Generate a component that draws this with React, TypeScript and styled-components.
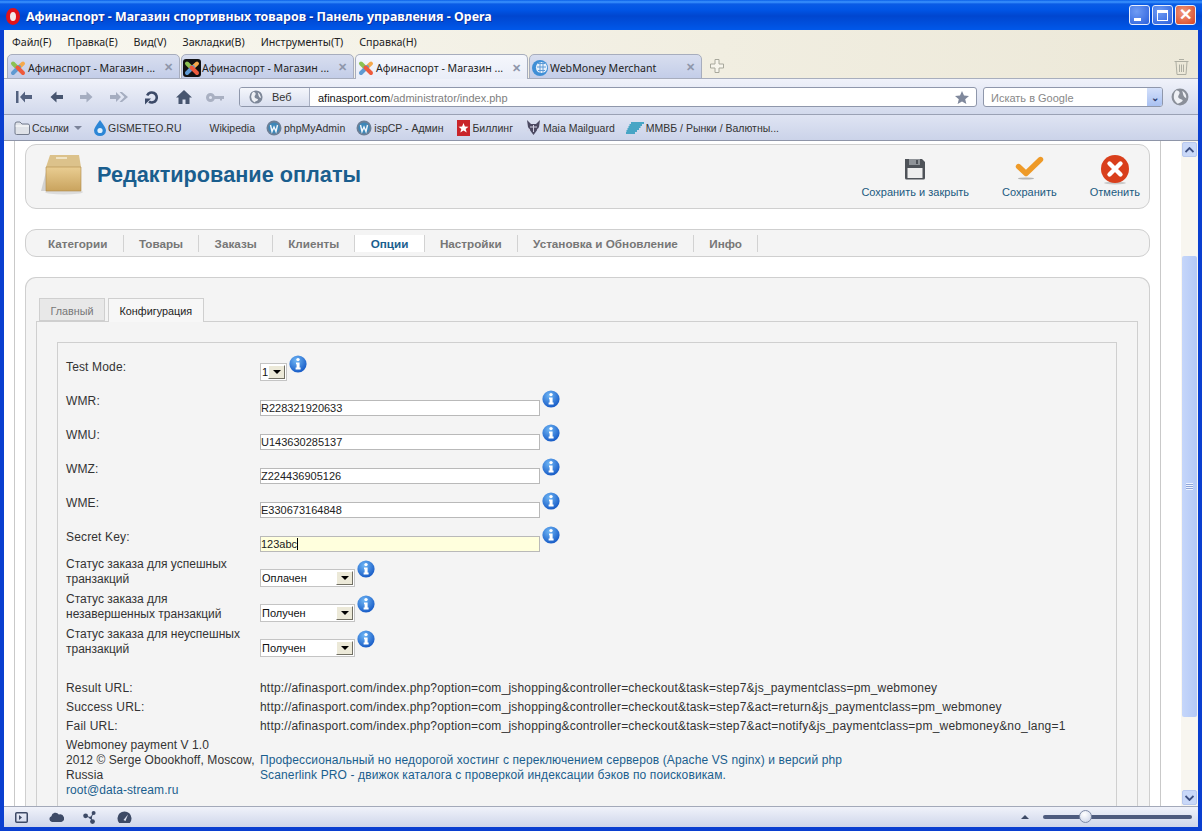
import React from "react";
import styled, { createGlobalStyle } from "styled-components";

const GlobalStyle = createGlobalStyle`
  html, body {
    margin: 0;
    height: 100%;
    overflow: hidden;
    background: #0831d9;
  }
  * {
    box-sizing: border-box;
  }
`;

const UI_FONT = `"Noto Sans", "Liberation Sans", sans-serif`;
const PAGE_FONT = `"Liberation Sans", Arial, sans-serif`;

/* ---------- icons ---------- */

function JoomlaIcon({ dark }: { dark?: boolean }) {
  return (
    <svg width="18" height="18" viewBox="0 0 18 18">
      {dark && <rect width="18" height="18" rx="3" fill="#111" />}
      <g fill="none" strokeWidth="4" strokeLinecap="round">
        <path d="M4 4.5 L9.5 10" stroke="#8cc152" />
        <path d="M14 4.5 L8 10" stroke="#f5a94c" />
        <path d="M4 14 L10 8" stroke="#5f9ad2" />
        <path d="M14 14 L8.5 8.5" stroke="#ee5a3c" />
      </g>
    </svg>
  );
}

function WebMoneyIcon() {
  return (
    <svg width="18" height="18" viewBox="0 0 18 18">
      <circle cx="9" cy="9" r="8" fill="#3f8fd6" />
      <circle cx="10.5" cy="8.5" r="5.6" fill="#e8f1fb" />
      <path d="M7 4.5h7M6 8h9M7 11.5h7M9 3v11M12 3v11" stroke="#5c9ad6" strokeWidth="1" />
    </svg>
  );
}

function NavArrow({ color, kind }: { color: string; kind: "first" | "back" | "forward" | "fast" }) {
  const paths = {
    first: "M1 1h2.5v12H1z M10 1.5 L5 7 L10 12.5 V9 H17 V5 H10z",
    back: "M7.5 1.5 L1.5 7 L7.5 12.5 V9 H14 V5 H7.5z",
    forward: "M6.5 1.5 L12.5 7 L6.5 12.5 V9 H0 V5 H6.5z",
    fast: "M6 2 L11 7 L6 12 V9 H0 V5 H6z M12 2 L18 7 L12 12 H9.5 L14.5 7 L9.5 2z",
  };
  const width = kind === "fast" ? 18 : kind === "first" ? 17 : 14;
  return (
    <svg width={width} height="14" viewBox={`0 0 ${width} 14`}>
      <path d={paths[kind]} fill={color} />
    </svg>
  );
}

function ReloadIcon() {
  return (
    <svg width="14" height="15" viewBox="0 0 14 15">
      <path d="M2.2 5.5 A5 5 0 1 1 4 11.6" fill="none" stroke="#3c4a68" strokeWidth="2.6" />
      <path d="M0 14.5 V8.5 H6 z" fill="#3c4a68" />
    </svg>
  );
}

function HomeIcon() {
  return (
    <svg width="16" height="14" viewBox="0 0 16 14">
      <path d="M8 0 L16 7.5 H13.5 V14 H9.5 V9.5 H6.5 V14 H2.5 V7.5 H0z" fill="#47556f" />
    </svg>
  );
}

function KeyIcon() {
  return (
    <svg width="18" height="9" viewBox="0 0 18 9">
      <path d="M4.5 0 A4.5 4.5 0 1 1 4.5 9 A4.5 4.5 0 1 1 4.5 0z M4.5 3 A1.5 1.5 0 1 0 4.5 6 A1.5 1.5 0 1 0 4.5 3z" fill="#a9b0c2" fillRule="evenodd" />
      <path d="M8 3 H18 V6 H16 V7.5 H14 V6 H8z" fill="#a9b0c2" />
    </svg>
  );
}

function GlobeIcon({ size, color }: { size: number; color: string }) {
  return (
    <svg width={size} height={size} viewBox="0 0 16 16">
      <circle cx="8" cy="8" r="7.5" fill={color} />
      <path d="M5 2 Q9 3 7 6 T9 10 T6 14 Q2 11 2.5 7 T5 2z M10 2.5 Q14 5 13.5 9 Q12 9 11 6.5z" fill="#eef0f5" />
    </svg>
  );
}

function StarIcon() {
  return (
    <svg width="14" height="13" viewBox="0 0 14 13">
      <path d="M7 0 L9 4.6 L14 5 L10.2 8.2 L11.4 13 L7 10.4 L2.6 13 L3.8 8.2 L0 5 L5 4.6z" fill="#7f889c" />
    </svg>
  );
}

function PlusIcon() {
  return (
    <svg width="14" height="14" viewBox="0 0 14 14">
      <path d="M5 .5 H9 V5 H13.5 V9 H9 V13.5 H5 V9 H.5 V5 H5z" fill="#f7f5ec" stroke="#a8a89c" />
    </svg>
  );
}

function TrashIcon() {
  return (
    <svg width="15" height="17" viewBox="0 0 15 17">
      <path d="M5 1.5 H10 M.5 3.5 H14.5 M2 4 L3 16.5 H12 L13 4 M5.5 6.5 V14 M7.5 6.5 V14 M9.5 6.5 V14" fill="none" stroke="#aeaea2" />
    </svg>
  );
}

function FolderIcon() {
  return (
    <svg width="16" height="14" viewBox="0 0 16 14">
      <path d="M1 3 Q1 1 3 1 H6 L8 3 H14 Q15.5 3 15.5 5 V12 Q15.5 13.5 14 13.5 H2.5 Q1 13.5 1 12z" fill="#dfe2e8" stroke="#737b8c" />
      <path d="M1.5 5 H15" stroke="#fff" />
    </svg>
  );
}

function DropIcon() {
  return (
    <svg width="12" height="16" viewBox="0 0 12 16">
      <path d="M6 0 Q12 8 12 10.5 A6 5.5 0 0 1 0 10.5 Q0 8 6 0z" fill="#2c86d6" />
      <circle cx="6" cy="10.5" r="2.6" fill="#dff0fc" />
    </svg>
  );
}

function WampIcon() {
  return (
    <svg width="16" height="16" viewBox="0 0 16 16">
      <circle cx="8" cy="8" r="7.5" fill="#6c7f96" />
      <circle cx="8" cy="8" r="5.6" fill="#3d87b8" />
      <path d="M4.5 5 L6 11.5 L8 7 L10 11.5 L11.5 5" fill="none" stroke="#f2f6fa" strokeWidth="1.4" />
    </svg>
  );
}

function BillingIcon() {
  return (
    <svg width="13" height="16" viewBox="0 0 13 16">
      <rect width="13" height="16" fill="#c9252a" />
      <path d="M6.5 3 L7.9 6.5 L11.5 6.7 L8.7 9 L9.7 12.5 L6.5 10.5 L3.3 12.5 L4.3 9 L1.5 6.7 L5.1 6.5z" fill="#fff" />
    </svg>
  );
}

function MaiaIcon() {
  return (
    <svg width="15" height="17" viewBox="0 0 15 17">
      <path d="M1 1 L5 5 H10 L14 1 L13 8 L10.5 12 L7.5 16 L4.5 12 L2 8z" fill="#4c4a62" />
      <path d="M4 8 H11 M7.5 6 V13 M1 12 L4 10 M14 12 L11 10" stroke="#d4d2e4" strokeWidth="1" />
    </svg>
  );
}

function MmvbIcon() {
  return (
    <svg width="18" height="12" viewBox="0 0 18 12">
      <path d="M5 1 H18 M3.5 3 H16 M2.5 5 H14.5 M1.5 7 H13 M.5 9 H11 M0 11 H9" stroke="#1a94b8" strokeWidth="1.3" />
    </svg>
  );
}

function BoxIcon() {
  return (
    <svg width="43" height="42" viewBox="0 0 43 42">
      <defs>
        <linearGradient id="boxFront" x1="0" y1="0" x2="0" y2="1">
          <stop offset="0" stopColor="#e9cd92" />
          <stop offset="1" stopColor="#c9a35e" />
        </linearGradient>
      </defs>
      <ellipse cx="24" cy="38" rx="19" ry="2.5" fill="#dcdcdc" />
      <path d="M1 37 L7 14 V37z" fill="#d2d2d2" />
      <path d="M10 1 H39 L41 13 H6z" fill="#dcc28b" />
      <path d="M6 13 H41 V37 H6z" fill="url(#boxFront)" stroke="#b08c4c" strokeWidth=".6" />
      <rect x="16" y="3" width="11" height="2" fill="#f0e4c6" />
    </svg>
  );
}

function SaveIcon() {
  return (
    <svg width="22" height="23" viewBox="0 0 22 23">
      <path d="M1 1 H18 L21 4 V20 Q21 21.5 19.5 21.5 H2.5 Q1 21.5 1 20z" fill="#4f5359" />
      <rect x="5" y="1" width="11" height="6" fill="#8f9398" />
      <rect x="12" y="2" width="2" height="4" fill="#4f5359" />
      <rect x="3.5" y="10" width="15" height="10" fill="#eeeeee" />
    </svg>
  );
}

function CheckIcon() {
  return (
    <svg width="29" height="25" viewBox="0 0 29 25">
      <ellipse cx="11" cy="23.5" rx="8" ry="1" fill="#b5b5b5" />
      <path d="M3.5 11.5 L11 18.5 L25.5 4.5" fill="none" stroke="#ee9a28" strokeWidth="5.4" strokeLinecap="round" strokeLinejoin="round" />
    </svg>
  );
}

function CancelIcon() {
  return (
    <svg width="30" height="30" viewBox="0 0 30 30">
      <ellipse cx="15" cy="28" rx="11" ry="1.5" fill="#c9c9c9" />
      <circle cx="15" cy="14" r="14" fill="#d93f1c" />
      <path d="M9.5 8.5 L20.5 19.5 M20.5 8.5 L9.5 19.5" stroke="#fff" strokeWidth="4.4" strokeLinecap="round" />
    </svg>
  );
}

function InfoIcon() {
  return (
    <InfoSvg width="18" height="18" viewBox="0 0 18 18">
      <defs>
        <radialGradient id="infoFill" cx=".4" cy=".3" r=".8">
          <stop offset="0" stopColor="#6fb6f5" />
          <stop offset="1" stopColor="#0b4fc0" />
        </radialGradient>
      </defs>
      <circle cx="9" cy="9" r="8.6" fill="url(#infoFill)" />
      <circle cx="9" cy="4.6" r="1.7" fill="#fff" />
      <path d="M7 7.5 H10.6 V12.6 H11.6 V14.4 H6.6 V12.6 H7.6 V9.3 H7z" fill="#fff" />
    </InfoSvg>
  );
}

function StatusPanelIcon() {
  return (
    <svg width="13" height="11" viewBox="0 0 13 11">
      <rect x=".75" y=".75" width="11.5" height="9.5" rx="1" fill="none" stroke="#3d4a66" strokeWidth="1.5" />
      <path d="M4 3 L7 5.5 L4 8z" fill="#3d4a66" />
    </svg>
  );
}

function CloudIcon() {
  return (
    <svg width="15" height="10" viewBox="0 0 15 10">
      <path d="M3 10 A3 3 0 0 1 2.4 4.2 A4 4 0 0 1 9.8 2.6 A3.4 3.4 0 0 1 12.4 10z" fill="#3d4a66" />
    </svg>
  );
}

function UniteIcon() {
  return (
    <svg width="14" height="13" viewBox="0 0 14 13">
      <path d="M3 5 L8 7 L10 2 M8 7 L9.5 11" stroke="#3d4a66" fill="none" />
      <circle cx="2.6" cy="4.8" r="2.4" fill="#3d4a66" />
      <circle cx="10.6" cy="2" r="2" fill="#3d4a66" />
      <circle cx="9.5" cy="10.6" r="2.4" fill="#3d4a66" />
      <circle cx="7.6" cy="6.8" r="1.4" fill="#3d4a66" />
    </svg>
  );
}

function SpeedIcon() {
  return (
    <svg width="15" height="12" viewBox="0 0 15 12">
      <path d="M2.2 12 A7 7 0 1 1 12.8 12z" fill="#3d4a66" />
      <path d="M6.5 9 L11 3.5 L8.5 10z" fill="#dfe4f2" />
    </svg>
  );
}

/* ---------- window chrome ---------- */

const Window = styled.div`
  height: 100vh;
  display: flex;
  flex-direction: column;
  background: #0a3fd0;
  overflow: hidden;
`;

const TitleBar = styled.div`
  height: 30px;
  flex: none;
  display: flex;
  align-items: center;
  padding: 3px 6px 0 6px;
  background: linear-gradient(
    #0a5fe8 0,
    #3d95ff 2px,
    #0a5ce6 4px,
    #0055e5 10px,
    #0046cf 16px,
    #0050de 24px,
    #0058ea 30px
  );
`;

const OperaLogo = styled.div`
  width: 14px;
  height: 17px;
  border: 4px solid #e0121a;
  border-radius: 50%;
  background: #f4e9e9;
  margin-right: 6px;
`;

const TitleText = styled.div`
  font: bold 12.4px ${UI_FONT};
  color: #fff;
  text-shadow: 1px 1px 0 #0a2f9c;
  white-space: nowrap;
`;

const WindowButtons = styled.div`
  margin-left: auto;
  margin-top: -3px;
  display: flex;
  gap: 2px;
`;

const WindowButton = styled.div<{ $close?: boolean }>`
  width: 21px;
  height: 20px;
  border: 1px solid #e8eefc;
  border-radius: 3px;
  display: flex;
  align-items: center;
  justify-content: center;
  background: ${(p) =>
    p.$close
      ? "radial-gradient(circle at 40% 35%, #f09a80, #d8431e)"
      : "radial-gradient(circle at 35% 30%, #6f9cf4, #2a5fdc)"};
`;

const MinimizeGlyph = styled.span`
  width: 7px;
  height: 3px;
  background: #fff;
  margin-top: 9px;
  margin-right: 5px;
`;

const MaximizeGlyph = styled.span`
  width: 11px;
  height: 11px;
  border: 1px solid #fff;
  border-top-width: 3px;
`;

const CloseGlyph = styled.span`
  font: bold 16px/1 ${PAGE_FONT};
  color: #fff;
`;

const Client = styled.div`
  flex: 1;
  min-height: 0;
  margin: 0 4px 4px;
  display: flex;
  flex-direction: column;
`;

const MenuBar = styled.div`
  height: 24px;
  flex: none;
  display: flex;
  align-items: center;
  gap: 16px;
  padding-left: 8px;
  font: 10.7px ${UI_FONT};
  color: #222;
  background: linear-gradient(90deg, #f8f7f0 0, #f1eee1 60%, #ece8d8 100%);
`;

const TabStrip = styled.div`
  height: 25px;
  flex: none;
  display: flex;
  align-items: stretch;
  padding-left: 3px;
  border-bottom: 1px solid #a8aebd;
  background: linear-gradient(90deg, #f8f7f0 0, #f1eee1 60%, #ece8d8 100%);
`;

const BrowserTab = styled.div<{ $active?: boolean }>`
  width: 173px;
  flex: none;
  margin-right: 1px;
  margin-bottom: -1px;
  display: flex;
  align-items: center;
  padding: 2px 6px 0 1px;
  gap: 1px;
  border: 1px solid #a7adbd;
  border-bottom: ${(p) => (p.$active ? "none" : "1px solid #a7adbd")};
  border-radius: 5px 5px 0 0;
  font: 10.6px ${UI_FONT};
  color: #222;
  white-space: nowrap;
  background: ${(p) =>
    p.$active
      ? "linear-gradient(#f5f7fc, #e9edf8)"
      : "linear-gradient(#d8deef, #c3cde8)"};
`;

const TabLabel = styled.span`
  flex: 1;
`;

const TabClose = styled.span`
  font: bold 11px ${PAGE_FONT};
  color: #8e96aa;
`;

const NewTab = styled.div`
  display: flex;
  align-items: center;
  margin-left: 7px;
`;

const Trash = styled.div`
  display: flex;
  align-items: center;
  margin-left: auto;
  margin-right: 9px;
`;

const NavBar = styled.div`
  height: 36px;
  flex: none;
  display: flex;
  align-items: center;
  padding: 1px 0 0 11px;
  border-bottom: 1px solid #9aa1b4;
  background: linear-gradient(#f0f2fa, #d2d9ec);
`;

const NavIcon = styled.div<{ $width: number }>`
  width: ${(p) => p.$width}px;
  flex: none;
  display: flex;
  align-items: center;
`;

const AddressBar = styled.div`
  width: 738px;
  height: 20px;
  margin-left: 15px;
  flex: none;
  display: flex;
  align-items: center;
  border: 1px solid #8f97ab;
  border-radius: 3px;
  background: #fff;
  overflow: hidden;
`;

const Scheme = styled.div`
  width: 70px;
  height: 100%;
  flex: none;
  display: flex;
  align-items: center;
  gap: 9px;
  padding-left: 9px;
  border-right: 1px solid #a9b0c2;
  background: linear-gradient(#f4f6fb, #d9dfef);
  font: 11px ${PAGE_FONT};
  color: #333;
`;

const AddressText = styled.div`
  flex: 1;
  padding: 1px 0 0 8px;
  font: 11px ${PAGE_FONT};
  color: #111;
`;

const AddressPath = styled.span`
  color: #7e7e7e;
`;

const StarSlot = styled.div`
  display: flex;
  margin-right: 7px;
`;

const SearchBox = styled.div`
  width: 180px;
  height: 20px;
  margin-left: 6px;
  flex: none;
  display: flex;
  border: 1px solid #8f97ab;
  border-radius: 3px;
  background: #fff;
  overflow: hidden;
`;

const SearchHint = styled.div`
  flex: 1;
  padding: 4px 0 0 7px;
  font: 11px ${PAGE_FONT};
  color: #888;
`;

const SearchDrop = styled.div`
  width: 15px;
  background: linear-gradient(#d4e0fa, #a9c1f2);
  display: flex;
  align-items: center;
  justify-content: center;
  font: bold 10px ${PAGE_FONT};
  color: #2b3c70;
`;

const SearchGlobe = styled.div`
  display: flex;
  margin-left: 8px;
`;

const BookmarkBar = styled.div`
  height: 26px;
  flex: none;
  display: flex;
  align-items: center;
  padding-left: 10px;
  border-bottom: 1px solid #8e95a8;
  background: linear-gradient(#dfe4f3, #cbd3e9);
  font: 10.5px ${PAGE_FONT};
  color: #333;
  white-space: nowrap;
`;

const Bookmark = styled.div<{ $gap: number }>`
  display: flex;
  align-items: center;
  gap: 2px;
  margin-left: ${(p) => p.$gap}px;
`;

const BookmarkArrow = styled.span`
  width: 0;
  height: 0;
  margin-left: 3px;
  border: 4px solid transparent;
  border-top: 4px solid #7c8499;
  border-bottom: none;
`;

/* ---------- scrolled page ---------- */

const Viewport = styled.div`
  flex: 1;
  min-height: 0;
  display: flex;
  background: #fff;
`;

const PageArea = styled.div`
  width: 1177px;
  flex: none;
  overflow: hidden;
  padding-left: 10px;
`;

const Page = styled.div`
  width: 1147px;
  min-height: 100%;
  padding: 3px 10px 0;
  border-left: 1px solid #c9c9c9;
  border-right: 1px solid #c9c9c9;
  font: 12px ${PAGE_FONT};
  color: #333;
`;

const Panel = styled.div`
  border: 1px solid #cfcfcf;
  background: #f4f4f4;
  border-radius: 11px;
`;

const HeaderPanel = styled(Panel)`
  height: 65px;
  margin-bottom: 20px;
  display: flex;
  padding: 9px 9px 0 14px;
`;

const PageTitle = styled.h1`
  margin: 8px 0 0 14px;
  font: bold 21.7px ${PAGE_FONT};
  color: #1a5e8e;
`;

const Toolbar = styled.div`
  margin-left: auto;
  display: flex;
  gap: 33px;
`;

const ToolButton = styled.div`
  display: flex;
  flex-direction: column;
  align-items: center;
  font-size: 11px;
  color: #1b5a80;
`;

const ToolIcon = styled.div<{ $top: number }>`
  height: 32px;
  padding-top: ${(p) => p.$top}px;
  display: flex;
  align-items: flex-start;
`;

const MainNav = styled(Panel)`
  height: 28px;
  margin-bottom: 20px;
  display: flex;
  align-items: center;
  padding-left: 7px;
`;

const NavLink = styled.div<{ $active?: boolean }>`
  height: 17px;
  padding: 0 15.25px;
  border-right: 1px solid #d2d2d2;
  font: bold 11.7px/17px ${PAGE_FONT};
  color: ${(p) => (p.$active ? "#1a5e8e" : "#777")};
  background: ${(p) => (p.$active ? "#fff" : "transparent")};

  &:first-child {
    padding-left: 15px;
  }
`;

const MainPanel = styled(Panel)`
  padding: 20px 11px 0 10px;
  border-bottom: none;
  border-radius: 11px 11px 0 0;
`;

const TabRow = styled.div`
  height: 23px;
  display: flex;
  gap: 3px;
  padding-left: 3px;
`;

const FormTab = styled.div<{ $active?: boolean }>`
  height: ${(p) => (p.$active ? 24 : 23)}px;
  padding: 0 10.5px;
  position: relative;
  z-index: 1;
  border: 1px solid #cfcfcf;
  border-bottom: ${(p) => (p.$active ? "none" : "1px solid #cfcfcf")};
  font-size: 10.8px;
  line-height: 24px;
  color: ${(p) => (p.$active ? "#222" : "#777")};
  background: ${(p) => (p.$active ? "#f7f7f7" : "#e8e8e8")};
`;

const TabBody = styled.div`
  padding: 20px;
  border: 1px solid #cfcfcf;
  border-bottom: none;
`;

const FieldBox = styled.div`
  padding: 17px 8px 0;
  border: 1px solid #cfcfcf;
  border-bottom: none;
`;

const Row = styled.div<{ $height: number }>`
  height: ${(p) => p.$height}px;
  display: grid;
  grid-template-columns: 194px 1fr;
  line-height: 15px;
`;

const FieldLabel = styled.div<{ $top?: number }>`
  padding-top: ${(p) => p.$top ?? 0}px;
  letter-spacing: 0.15px;
`;

const StatusLabel = styled.div`
  padding-right: 4px;
`;

const Control = styled.div`
  display: flex;
  align-items: flex-start;
  gap: 2px;
`;

const InputWrap = styled.div`
  position: relative;
  margin-top: 7px;
`;

const TextInput = styled.input<{ $focused?: boolean }>`
  display: block;
  width: 280px;
  height: 16px;
  padding: 0;
  border: 1px solid #b9b9b9;
  outline: none;
  font: 11px ${PAGE_FONT};
  color: #222;
  background: ${(p) => (p.$focused ? "#ffffdd" : "#fff")};
`;

const Caret = styled.span`
  position: absolute;
  left: 37px;
  top: 2px;
  width: 1px;
  height: 12px;
  background: #000;
`;

const SelectBox = styled.div<{ $width: number; $top: number }>`
  width: ${(p) => p.$width}px;
  height: 18px;
  margin-top: ${(p) => p.$top}px;
  flex: none;
  display: flex;
  align-items: center;
  padding: 1px;
  border: 1px solid #c4c4c4;
  background: #fff;
  font: 11px ${PAGE_FONT};
  color: #111;
`;

const SelectValue = styled.span`
  flex: 1;
`;

const SelectArrow = styled.span`
  width: 17px;
  height: 100%;
  display: flex;
  align-items: center;
  justify-content: center;
  background: #ece9d8;
  border: 1px solid;
  border-color: #fff #716f64 #716f64 #fff;

  &::after {
    content: "";
    border: 4px solid transparent;
    border-top: 4px solid #000;
    border-bottom: none;
  }
`;

const InfoSvg = styled.svg`
  flex: none;
`;

const InfoSlot = styled.div<{ $top: number }>`
  display: flex;
  margin-top: ${(p) => p.$top}px;
`;

const UrlGroup = styled.div`
  margin-top: 17px;
`;

const UrlRow = styled.div`
  height: 19px;
  display: grid;
  grid-template-columns: 194px 1fr;
  line-height: 19px;
  white-space: nowrap;
  letter-spacing: 0.2px;
`;

const Footer = styled.div`
  margin-top: 2px;
  display: grid;
  grid-template-columns: 194px 1fr;
  line-height: 15px;
  padding-bottom: 30px;
`;

const FooterNote = styled.div`
  padding-right: 4px;
  letter-spacing: 0.08px;
`;

const FooterLinks = styled.div`
  padding-top: 15px;
  letter-spacing: 0.12px;
`;

const PageLink = styled.a`
  display: block;
  color: #1a5e8e;
  text-decoration: none;
`;

/* ---------- scrollbar + status bar ---------- */

const ScrollTrack = styled.div`
  width: 17px;
  flex: none;
  display: flex;
  flex-direction: column;
  align-items: center;
  padding: 1px 0;
  background: #f8f6f0;
`;

const ScrollButton = styled.div`
  width: 15px;
  height: 15px;
  flex: none;
  display: flex;
  align-items: center;
  justify-content: center;
  border: 1px solid #b8c8ee;
  border-radius: 2px;
  background: #c9d8f8;
`;

const ScrollThumb = styled.div`
  width: 15px;
  height: 461px;
  margin-top: 99px;
  flex: none;
  display: flex;
  align-items: center;
  justify-content: center;
  border-radius: 2px;
  background: linear-gradient(90deg, #c5d6fa, #b4c9f6);
`;

const ThumbGrip = styled.span`
  width: 7px;
  height: 7px;
  background: repeating-linear-gradient(#eef3ff 0 1px, #8ea5d8 1px 2px);
`;

const ScrollPush = styled.div`
  margin-top: auto;
`;

const StatusBar = styled.div`
  height: 21px;
  flex: none;
  display: flex;
  align-items: center;
  padding-left: 11px;
  border-top: 1px solid #a3a9b9;
  background: linear-gradient(#f0f2fa, #ced6ea);
`;

const StatusIcon = styled.div`
  width: 34px;
  display: flex;
  align-items: center;
`;

const ZoomUp = styled.span`
  flex: none;
  margin-left: auto;
  width: 0;
  height: 0;
  border-left: 4px solid transparent;
  border-right: 4px solid transparent;
  border-bottom: 4px solid #3d4a66;
`;

const Slider = styled.div`
  width: 149px;
  height: 4px;
  margin: 0 6px 0 14px;
  position: relative;
  border-radius: 2px;
  background: #4d5b7e;
`;

const SliderKnob = styled.span`
  position: absolute;
  left: 36px;
  top: -5px;
  width: 13px;
  height: 13px;
  border-radius: 50%;
  border: 1px solid #7e8aa6;
  background: radial-gradient(circle at 40% 30%, #fff, #c7d0e6);
`;

/* ---------- data ---------- */

const mainNav = ["Категории", "Товары", "Заказы", "Клиенты", "Опции", "Настройки", "Установка и Обновление", "Инфо"];

const textFields = [
  { label: "WMR:", value: "R228321920633" },
  { label: "WMU:", value: "U143630285137" },
  { label: "WMZ:", value: "Z224436905126" },
  { label: "WME:", value: "E330673164848" },
];

const statusFields = [
  { label: "Статус заказа для успешных транзакций", value: "Оплачен" },
  { label: "Статус заказа для незавершенных транзакций", value: "Получен" },
  { label: "Статус заказа для неуспешных транзакций", value: "Получен" },
];

const urls = [
  { label: "Result URL:", value: "http://afinasport.com/index.php?option=com_jshopping&controller=checkout&task=step7&js_paymentclass=pm_webmoney" },
  { label: "Success URL:", value: "http://afinasport.com/index.php?option=com_jshopping&controller=checkout&task=step7&act=return&js_paymentclass=pm_webmoney" },
  { label: "Fail URL:", value: "http://afinasport.com/index.php?option=com_jshopping&controller=checkout&task=step7&act=notify&js_paymentclass=pm_webmoney&no_lang=1" },
];

export default function App() {
  return (
    <Window>
      <GlobalStyle />
      <TitleBar>
        <OperaLogo />
        <TitleText>Афинаспорт - Магазин спортивных товаров - Панель управления - Opera</TitleText>
        <WindowButtons>
          <WindowButton><MinimizeGlyph /></WindowButton>
          <WindowButton><MaximizeGlyph /></WindowButton>
          <WindowButton $close><CloseGlyph>✕</CloseGlyph></WindowButton>
        </WindowButtons>
      </TitleBar>

      <Client>
        <MenuBar>
          <span>Файл(F)</span>
          <span>Правка(E)</span>
          <span>Вид(V)</span>
          <span>Закладки(B)</span>
          <span>Инструменты(T)</span>
          <span>Справка(H)</span>
        </MenuBar>

        <TabStrip>
          <BrowserTab><JoomlaIcon /><TabLabel>Афинаспорт - Магазин ...</TabLabel><TabClose>✕</TabClose></BrowserTab>
          <BrowserTab><JoomlaIcon dark /><TabLabel>Афинаспорт - Магазин ...</TabLabel><TabClose>✕</TabClose></BrowserTab>
          <BrowserTab $active><JoomlaIcon /><TabLabel>Афинаспорт - Магазин ...</TabLabel><TabClose>✕</TabClose></BrowserTab>
          <BrowserTab><WebMoneyIcon /><TabLabel>WebMoney Merchant</TabLabel><TabClose>✕</TabClose></BrowserTab>
          <NewTab><PlusIcon /></NewTab>
          <Trash><TrashIcon /></Trash>
        </TabStrip>

        <NavBar>
          <NavIcon $width={34}><NavArrow kind="first" color="#53617f" /></NavIcon>
          <NavIcon $width={31}><NavArrow kind="back" color="#47556f" /></NavIcon>
          <NavIcon $width={30}><NavArrow kind="forward" color="#a5adc0" /></NavIcon>
          <NavIcon $width={35}><NavArrow kind="fast" color="#a5adc0" /></NavIcon>
          <NavIcon $width={31}><ReloadIcon /></NavIcon>
          <NavIcon $width={30}><HomeIcon /></NavIcon>
          <NavIcon $width={18}><KeyIcon /></NavIcon>
          <AddressBar>
            <Scheme><GlobeIcon size={14} color="#7d8798" /><span>Веб</span></Scheme>
            <AddressText>afinasport.com<AddressPath>/administrator/index.php</AddressPath></AddressText>
            <StarSlot><StarIcon /></StarSlot>
          </AddressBar>
          <SearchBox>
            <SearchHint>Искать в Google</SearchHint>
            <SearchDrop>⌄</SearchDrop>
          </SearchBox>
          <SearchGlobe><GlobeIcon size={18} color="#8a8f99" /></SearchGlobe>
        </NavBar>

        <BookmarkBar>
          <Bookmark $gap={0}><FolderIcon />Ссылки<BookmarkArrow /></Bookmark>
          <Bookmark $gap={12}><DropIcon />GISMETEO.RU</Bookmark>
          <Bookmark $gap={28}>Wikipedia</Bookmark>
          <Bookmark $gap={11}><WampIcon />phpMyAdmin</Bookmark>
          <Bookmark $gap={11}><WampIcon />ispCP - Админ</Bookmark>
          <Bookmark $gap={14}><BillingIcon />Биллинг</Bookmark>
          <Bookmark $gap={13}><MaiaIcon />Maia Mailguard</Bookmark>
          <Bookmark $gap={11}><MmvbIcon />ММВБ / Рынки / Валютны...</Bookmark>
        </BookmarkBar>

        <Viewport>
          <PageArea>
            <Page>
              <HeaderPanel>
                <BoxIcon />
                <PageTitle>Редактирование оплаты</PageTitle>
                <Toolbar>
                  <ToolButton><ToolIcon $top={4}><SaveIcon /></ToolIcon>Сохранить и закрыть</ToolButton>
                  <ToolButton><ToolIcon $top={1}><CheckIcon /></ToolIcon>Сохранить</ToolButton>
                  <ToolButton><ToolIcon $top={1}><CancelIcon /></ToolIcon>Отменить</ToolButton>
                </Toolbar>
              </HeaderPanel>

              <MainNav>
                {mainNav.map((item) => (
                  <NavLink key={item} $active={item === "Опции"}>{item}</NavLink>
                ))}
              </MainNav>

              <MainPanel>
                <TabRow>
                  <FormTab>Главный</FormTab>
                  <FormTab $active>Конфигурация</FormTab>
                </TabRow>
                <TabBody>
                  <FieldBox>
                    <Row $height={33}>
                      <FieldLabel>Test Mode:</FieldLabel>
                      <Control>
                        <SelectBox $width={27} $top={3}>
                          <SelectValue>1</SelectValue>
                          <SelectArrow />
                        </SelectBox>
                        <InfoSlot $top={-5}><InfoIcon /></InfoSlot>
                      </Control>
                    </Row>

                    {textFields.map((field) => (
                      <Row key={field.label} $height={34}>
                        <FieldLabel $top={1}>{field.label}</FieldLabel>
                        <Control>
                          <InputWrap><TextInput readOnly value={field.value} /></InputWrap>
                          <InfoSlot $top={-3}><InfoIcon /></InfoSlot>
                        </Control>
                      </Row>
                    ))}

                    <Row $height={28}>
                      <FieldLabel $top={1}>Secret Key:</FieldLabel>
                      <Control>
                        <InputWrap>
                          <TextInput $focused readOnly value="123abc" />
                          <Caret />
                        </InputWrap>
                        <InfoSlot $top={-3}><InfoIcon /></InfoSlot>
                      </Control>
                    </Row>

                    {statusFields.map((field) => (
                      <Row key={field.label} $height={35}>
                        <StatusLabel>{field.label}</StatusLabel>
                        <Control>
                          <SelectBox $width={95} $top={12}>
                            <SelectValue>{field.value}</SelectValue>
                            <SelectArrow />
                          </SelectBox>
                          <InfoSlot $top={3}><InfoIcon /></InfoSlot>
                        </Control>
                      </Row>
                    ))}

                    <UrlGroup>
                      {urls.map((url) => (
                        <UrlRow key={url.label}>
                          <div>{url.label}</div>
                          <div>{url.value}</div>
                        </UrlRow>
                      ))}
                    </UrlGroup>

                    <Footer>
                      <FooterNote>
                        Webmoney payment V 1.0
                        <br />
                        2012 © Serge Obookhoff, Moscow, Russia
                        <PageLink>root@data-stream.ru</PageLink>
                      </FooterNote>
                      <FooterLinks>
                        <PageLink>Профессиональный но недорогой хостинг с переключением серверов (Apache VS nginx) и версий php</PageLink>
                        <PageLink>Scanerlink PRO - движок каталога с проверкой индексации бэков по поисковикам.</PageLink>
                      </FooterLinks>
                    </Footer>
                  </FieldBox>
                </TabBody>
              </MainPanel>
            </Page>
          </PageArea>

          <ScrollTrack>
            <ScrollButton>
              <svg width="9" height="6" viewBox="0 0 9 6"><path d="M.5 5 L4.5 1 L8.5 5" fill="none" stroke="#3d4f80" strokeWidth="1.8" /></svg>
            </ScrollButton>
            <ScrollThumb><ThumbGrip /></ScrollThumb>
            <ScrollPush />
            <ScrollButton>
              <svg width="9" height="6" viewBox="0 0 9 6"><path d="M.5 1 L4.5 5 L8.5 1" fill="none" stroke="#3d4f80" strokeWidth="1.8" /></svg>
            </ScrollButton>
          </ScrollTrack>
        </Viewport>

        <StatusBar>
          <StatusIcon><StatusPanelIcon /></StatusIcon>
          <StatusIcon><CloudIcon /></StatusIcon>
          <StatusIcon><UniteIcon /></StatusIcon>
          <StatusIcon><SpeedIcon /></StatusIcon>
          <ZoomUp />
          <Slider><SliderKnob /></Slider>
        </StatusBar>
      </Client>
    </Window>
  );
}
